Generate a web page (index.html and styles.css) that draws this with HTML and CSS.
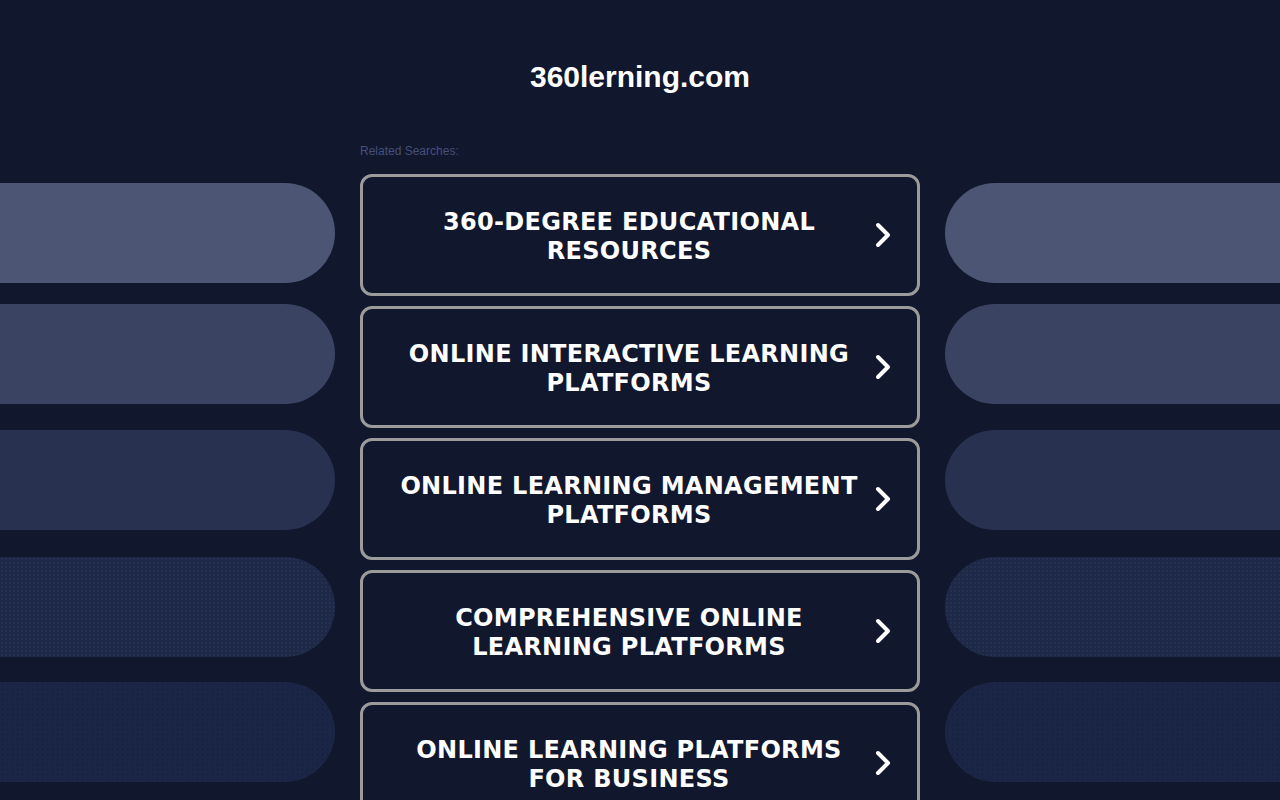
FILE: index.html
```html
<!DOCTYPE html>
<html lang="en">
<head>
<meta charset="utf-8">
<title>360lerning.com</title>
<link rel="stylesheet" href="styles.css">
</head>
<body>
<div class="deco deco-left">
  <div class="pill p1"></div>
  <div class="pill p2"></div>
  <div class="pill p3"></div>
  <div class="pill p4"></div>
  <div class="pill p5"></div>
</div>
<div class="deco deco-right">
  <div class="pill p1"></div>
  <div class="pill p2"></div>
  <div class="pill p3"></div>
  <div class="pill p4"></div>
  <div class="pill p5"></div>
</div>
<main class="page">
  <h1 class="domain">360lerning.com</h1>
  <section class="related">
    <div class="related-label">Related Searches:</div>
    <ul class="links">
      <li><a class="link" href="#"><span class="link-text">360-DEGREE EDUCATIONAL RESOURCES</span><svg class="chev" viewBox="0 0 16 26" width="16" height="26"><path d="M3 3 L13 13 L3 23" fill="none" stroke="#fff" stroke-width="4" stroke-linecap="round" stroke-linejoin="round"/></svg></a></li>
      <li><a class="link" href="#"><span class="link-text">ONLINE INTERACTIVE LEARNING PLATFORMS</span><svg class="chev" viewBox="0 0 16 26" width="16" height="26"><path d="M3 3 L13 13 L3 23" fill="none" stroke="#fff" stroke-width="4" stroke-linecap="round" stroke-linejoin="round"/></svg></a></li>
      <li><a class="link" href="#"><span class="link-text">ONLINE LEARNING MANAGEMENT PLATFORMS</span><svg class="chev" viewBox="0 0 16 26" width="16" height="26"><path d="M3 3 L13 13 L3 23" fill="none" stroke="#fff" stroke-width="4" stroke-linecap="round" stroke-linejoin="round"/></svg></a></li>
      <li><a class="link" href="#"><span class="link-text">COMPREHENSIVE ONLINE LEARNING PLATFORMS</span><svg class="chev" viewBox="0 0 16 26" width="16" height="26"><path d="M3 3 L13 13 L3 23" fill="none" stroke="#fff" stroke-width="4" stroke-linecap="round" stroke-linejoin="round"/></svg></a></li>
      <li><a class="link" href="#"><span class="link-text">ONLINE LEARNING PLATFORMS FOR BUSINESS</span><svg class="chev" viewBox="0 0 16 26" width="16" height="26"><path d="M3 3 L13 13 L3 23" fill="none" stroke="#fff" stroke-width="4" stroke-linecap="round" stroke-linejoin="round"/></svg></a></li>
    </ul>
  </section>
</main>
</body>
</html>
```

FILE: styles.css
```css
html, body {
  margin: 0;
  padding: 0;
  height: 100%;
  overflow: hidden;
}
body {
  background: #11172d;
  font-family: "Liberation Sans", Arial, sans-serif;
  color: #fff;
  position: relative;
}
.deco {
  position: absolute;
  top: 183px;
  width: 335px;
  display: flex;
  flex-direction: column;
}
.deco-left { left: 0; }
.deco-right { right: 0; }
.pill {
  height: 100px;
  margin-bottom: 25px;
}
.deco-left .pill { border-radius: 0 50px 50px 0; }
.deco-right .pill { border-radius: 50px 0 0 50px; }
.pill.p1 { background: #4c5674; margin-bottom: 21px; }
.pill.p2 { background: #3a4361; margin-bottom: 26px; }
.pill.p3 { background: #283150; margin-bottom: 27px; }
.pill.p4 {
  background-color: #1e2847;
  background-image: radial-gradient(circle, rgba(70,85,125,0.18) 0.7px, transparent 1.1px);
  background-size: 4px 4px;
}
.pill.p5 {
  background-color: #1b2545;
  background-image: radial-gradient(circle, rgba(10,16,36,0.35) 0.7px, transparent 1.1px);
  background-size: 5px 5px;
}
.page {
  position: relative;
  width: 560px;
  margin: 0 auto;
  padding-top: 59px;
}
.domain {
  margin: 0;
  text-align: center;
  font-size: 30px;
  line-height: 36px;
  font-weight: bold;
  color: #fff;
}
.related {
  margin-top: 49px;
}
.related-label {
  font-size: 12px;
  line-height: 14px;
  color: #46507a;
  margin-bottom: 16px;
}
.links {
  list-style: none;
  margin: 0;
  padding: 0;
  display: flex;
  flex-direction: column;
  gap: 10px;
}
.link {
  box-sizing: border-box;
  height: 122px;
  border: 3px solid #9b9b9b;
  border-radius: 12px;
  background: #11172d;
  display: flex;
  align-items: center;
  padding: 0 26px 0 20px;
  text-decoration: none;
  color: #fff;
}
.link-text {
  flex: 1;
  text-align: center;
  font-family: "DejaVu Sans", Verdana, sans-serif;
  font-weight: bold;
  font-size: 24px;
  line-height: 29px;
  letter-spacing: 0.3px;
  padding: 4px 8px 0;
}
.chev {
  flex: none;
  display: block;
}
```
